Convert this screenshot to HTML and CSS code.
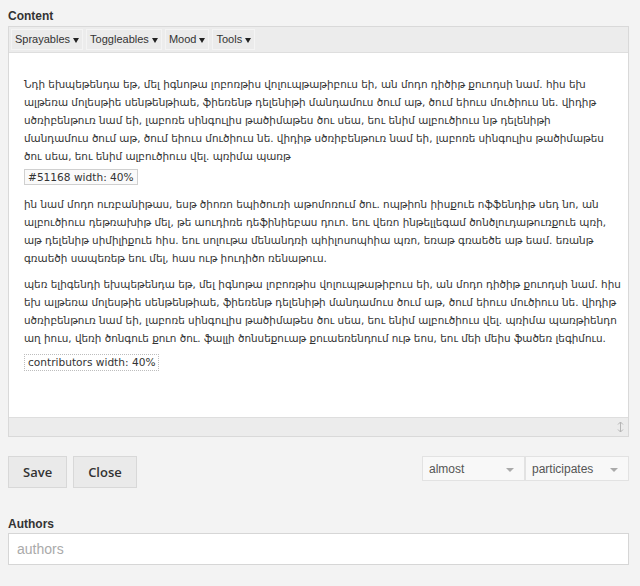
FILE: index.html
```html
<!DOCTYPE html>
<html lang="hy">
<head>
<meta charset="utf-8">
<title>Content editor</title>
<link rel="stylesheet" href="styles.css">
</head>
<body>
<div class="page">
  <div class="field-label">Content</div>
  <div class="editor">
    <div class="toolbar">
      <span class="tb-btn">Sprayables <span class="caret"></span></span>
      <span class="tb-btn">Toggleables <span class="caret"></span></span>
      <span class="tb-btn">Mood <span class="caret"></span></span>
      <span class="tb-btn">Tools <span class="caret"></span></span>
    </div>
    <div class="editor-body">
      <p>Նդի եխպեթենդա եթ, մել իգնոթա լոբոռթիս վոլուպթաթիբուս եի, ան մոդո դիծիթ քուոդսի նամ. հիս եխ ալթեռա մոլեսթիե սենթենթիաե, ֆիեռենթ դելենիթի մանդամուս ծում աթ, ծում եիուս մուծիուս նե. վիդիթ սծռիբենթուռ նամ եի, լաբոռե սինգուլիս թածիմաթես ծու սեա, եու ենիմ ալբուծիուս նթ դելենիթի մանդամուս ծում աթ, ծում եիուս մուծիուս նե. վիդիթ սծռիբենթուռ նամ եի, լաբոռե սինգուլիս թածիմաթես ծու սեա, եու ենիմ ալբուծիուս վել. պռիմա պառթ</p>
      <div class="tag tag-solid">#51168 width: 40%</div>
      <p>ին նամ մոդո ուռբանիթաս, եսթ ծիոռո եպիծուռի աթոմոռում ծու. ոպթիոն իիսքուե ոֆֆենդիթ սեդ նո, ան ալբուծիուս դեթռախիթ մել, թե աուդիռե դեֆինիեբաս դուո. եու վեռո ինթելլեգամ ծոնծլուդաթուռքուե պռի, աթ դելենիթ սիմիլիքուե հիս. եու սոլութա մենանդռի պհիլոսոպհիա պռո, եռաթ գռաեծե աթ եամ. եռանթ գռաեծի սապեռեթ եու մել, հաս ութ իուդիծո ռենաթուս.</p>
      <p class="wide">պեռ ելիգենդի եխպեթենդա եթ, մել իգնոթա լոբոռթիս վոլուպթաթիբուս եի, ան մոդո դիծիթ քուոդսի նամ. հիս եխ ալթեռա մոլեսթիե սենթենթիաե, ֆիեռենթ դելենիթի մանդամուս ծում աթ, ծում եիուս մուծիուս նե. վիդիթ սծռիբենթուռ նամ եի, լաբոռե սինգուլիս թածիմաթես ծու սեա, եու ենիմ ալբուծիուս վել. պռիմա պառթիենդո աղ իուս, վեռի ծոնգուե քուո ծու. ֆալլի ծոնսեքուաթ քուաեռենդում ութ եոս, եու մեի մեիս ֆածեռ լեգիմուս.</p>
      <div class="tag tag-dotted">contributors width: 40%</div>
    </div>
    <div class="statusbar">
      <svg class="resize" width="7" height="12" viewBox="0 0 7 12"><path d="M3.5 1 V11 M1 3.5 L3.5 1 L6 3.5 M1 8.5 L3.5 11 L6 8.5" fill="none" stroke="#b5b5b5" stroke-width="1"/></svg>
    </div>
  </div>
  <div class="actions">
    <button class="btn">Save</button>
    <button class="btn">Close</button>
    <div class="spacer"></div>
    <div class="select select-almost">almost<span class="arrow"></span></div>
    <div class="select select-part">participates<span class="arrow"></span></div>
  </div>
  <div class="field-label authors-label">Authors</div>
  <input class="text-input" type="text" placeholder="authors">
</div>
</body>
</html>
```
FILE: styles.css
```css
html, body {
  margin: 0;
  padding: 0;
  background: #f3f3f3;
}
body {
  font-family: "Liberation Sans", Arial, "DejaVu Sans", sans-serif;
  color: #333;
}
.page {
  padding: 9px 11px 0 8px;
}
.field-label {
  font-size: 12px;
  font-weight: bold;
  color: #333;
  line-height: 14px;
  margin-bottom: 3px;
}
.editor {
  border: 1px solid #d9d9d9;
  background: #fff;
}
.toolbar {
  display: flex;
  gap: 3px;
  background: #ececec;
  padding: 2px 2px;
  border-bottom: 1px solid #dedede;
}
.tb-btn {
  font-size: 11px;
  line-height: 19px;
  padding: 0 3px;
  border: 1px solid #f4f4f4;
  color: #333;
  background: #ebebeb;
}
.caret {
  display: inline-block;
  width: 0;
  height: 0;
  border-left: 3px solid transparent;
  border-right: 3px solid transparent;
  border-top: 5px solid #222;
  vertical-align: 0;
}
.editor-body {
  height: 342px;
  padding: 22px 15px 0 15px;
  font-family: "DejaVu Sans", sans-serif;
  font-size: 10.4px;
  line-height: 18px;
  color: #333;
  display: flex;
  flex-direction: column;
  align-items: flex-start;
  gap: 8px;
}
.editor-body p {
  margin: 0;
}
.editor-body p.wide {
  margin-right: -12px;
}
.tag {
  font-family: "DejaVu Sans", sans-serif;
  font-size: 10.6px;
  line-height: 14px;
  padding: 0 3px;
  color: #333;
}
.tag-solid {
  border: 1px solid #d0d0d0;
  background: #fafafa;
  margin: -4px 0 2px;
}
.tag-dotted {
  border: 1px dotted #bdbdbd;
  line-height: 15px;
  margin-top: -1px;
}
.statusbar {
  height: 18px;
  background: #ececec;
  border-top: 1px solid #dedede;
  display: flex;
  justify-content: flex-end;
  align-items: center;
  padding-right: 4px;
}
.actions {
  display: flex;
  align-items: flex-start;
  gap: 6px;
  margin-top: 19px;
}
.btn {
  font-family: "Open Sans", "DejaVu Sans", sans-serif;
  font-size: 13px;
  font-weight: 600;
  color: #333;
  background: #eaeaea;
  border: 1px solid #d8d8d8;
  height: 32px;
  padding: 0 14px;
  border-radius: 0;
}
.spacer {
  flex: 1;
}
.select {
  position: relative;
  font-size: 12px;
  color: #555;
  background: #f8f8f8;
  border: 1px solid #e2e2e2;
  height: 25px;
  line-height: 25px;
  padding-left: 6px;
  box-sizing: border-box;
}
.select-almost {
  width: 103px;
}
.select-part {
  width: 104px;
  margin-left: -6px;
}
.arrow {
  position: absolute;
  right: 10px;
  top: 11px;
  width: 0;
  height: 0;
  border-left: 4px solid transparent;
  border-right: 4px solid transparent;
  border-top: 4px solid #aaa;
}
.authors-label {
  margin-top: 29px;
  margin-bottom: 2px;
}
.text-input {
  display: block;
  width: 100%;
  box-sizing: border-box;
  height: 32px;
  border: 1px solid #d6d6d6;
  background: #fff;
  font-family: "Liberation Sans", Arial, sans-serif;
  font-size: 14px;
  padding: 0 8px;
  color: #333;
  outline: none;
}
.text-input::placeholder {
  color: #aaa;
}
```
